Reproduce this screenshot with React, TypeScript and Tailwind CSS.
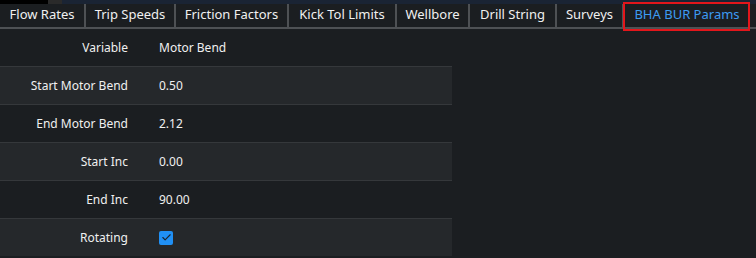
import { Check } from "lucide-react";

const tabs = [
  { label: "Flow Rates", w: "w-[86px]" },
  { label: "Trip Speeds", w: "w-[90px]" },
  { label: "Friction Factors", w: "w-[113px]" },
  { label: "Kick Tol Limits", w: "w-[108px]" },
  { label: "Wellbore", w: "w-[73px]" },
  { label: "Drill String", w: "w-[87px]" },
  { label: "Surveys", w: "w-[67px]" },
];

const rows: { label: string; value?: string; check?: boolean }[] = [
  { label: "Start Motor Bend", value: "0.50" },
  { label: "End Motor Bend", value: "2.12" },
  { label: "Start Inc", value: "0.00" },
  { label: "End Inc", value: "90.00" },
  { label: "Rotating", check: true },
];

export default function App() {
  return (
    <div
      className="w-[756px] h-[258px] overflow-hidden bg-[#1b1e21] text-[#f0f0f0]"
      style={{ fontFamily: '"Noto Sans", "Open Sans", sans-serif' }}
    >
      {/* strip above tabs */}
      <div className="flex h-[4px]">
        <div className="w-[48px] bg-black" />
        <div className="w-[14px] bg-[#2a2a2a]" />
        <div className="flex-1 bg-[#1a2434]" />
      </div>

      {/* tab bar */}
      <div className="relative flex h-[25px] border-b-2 border-[#4e5154] text-[13px] leading-none">
        {tabs.map((t) => (
          <div
            key={t.label}
            className={`${t.w} flex items-center justify-center border-r-2 border-[#4e5154] pb-[2px]`}
          >
            {t.label}
          </div>
        ))}
        <div className="w-[126px] flex items-center justify-center pb-[2px] text-[#3d9bf2]">
          BHA BUR Params
        </div>
        <div className="absolute left-[623px] top-[-2px] w-[127px] h-[29px] border-2 border-[#e3161b]" />
      </div>

      {/* variables table */}
      <div className="w-[452px] text-[12px]">
        <div className="flex h-[37px] items-center">
          <div className="w-[128px] text-right">Variable</div>
          <div className="pl-[31px]">Motor Bend</div>
        </div>
        {rows.map((r, i) => (
          <div
            key={r.label}
            className={`flex h-[38px] items-center border-t border-[#35383b] ${
              i % 2 === 0 ? "bg-[#25282b]" : "bg-[#1b1e21]"
            }`}
          >
            <div className="w-[128px] text-right">{r.label}</div>
            <div className="pl-[31px] flex items-center">
              {r.check ? (
                <span className="w-[14px] h-[14px] rounded-[2px] bg-[#2090f5] flex items-center justify-center">
                  <Check className="w-[11px] h-[11px] text-[#1b2530]" strokeWidth={2.5} />
                </span>
              ) : (
                r.value
              )}
            </div>
          </div>
        ))}
      </div>
    </div>
  );
}
